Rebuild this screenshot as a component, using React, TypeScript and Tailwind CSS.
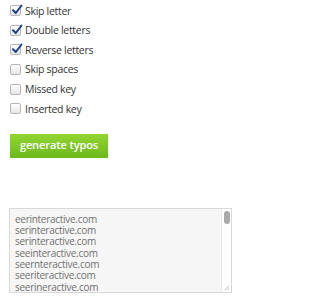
import React from "react";

const options = [
  { label: "Skip letter", checked: true },
  { label: "Double letters", checked: true },
  { label: "Reverse letters", checked: true },
  { label: "Skip spaces", checked: false },
  { label: "Missed key", checked: false },
  { label: "Inserted key", checked: false },
];

const lines = [
  "eerinteractive.com",
  "serinteractive.com",
  "serinteractive.com",
  "seeinteractive.com",
  "seernteractive.com",
  "seeriteractive.com",
  "seerineractive.com",
];

function Box({ checked }: { checked: boolean }) {
  return (
    <span className="relative w-[11px] h-[11px] rounded-[2px] border border-[#b5b5b5] bg-gradient-to-b from-[#ffffff] to-[#e6e6e6] shrink-0">
      {checked && (
        <svg
          viewBox="0 0 12 12"
          className="absolute left-[0px] top-[-2px] w-[12px] h-[12px]"
        >
          <path
            d="M2 6.2 L4.8 9 L10.5 1.5"
            fill="none"
            stroke="#1c3f8f"
            strokeWidth="2"
            strokeLinecap="round"
            strokeLinejoin="round"
          />
        </svg>
      )}
    </span>
  );
}

export default function App() {
  return (
    <div className="w-[246px] h-[300px] bg-white overflow-hidden font-['Open_Sans',sans-serif]">
      <div className="pl-[10px] pt-[1px] flex flex-col">
        {options.map((o) => (
          <div key={o.label} className="h-[19.6px] flex items-center gap-[4px]">
            <Box checked={o.checked} />
            <span className="text-[10.5px] tracking-[-0.3px] text-[#333] leading-none">{o.label}</span>
          </div>
        ))}
      </div>
      <div className="pl-[10px] mt-[15px]">
        <div className="w-[98px] h-[24px] flex items-center justify-center bg-gradient-to-b from-[#92d531] to-[#6cb91c] text-white font-semibold text-[11px] tracking-[-0.1px]">
          generate typos
        </div>
      </div>
      <div className="pl-[9px] mt-[50px]">
        <div className="relative w-[223px] h-[85px] border border-[#d8d8d8] bg-[#f6f6f6] flex">
          <div className="flex-1 pl-[5px] pt-[5px] overflow-hidden">
            {lines.map((l, i) => (
              <div key={i} className="text-[10px] leading-[11.35px] tracking-[-0.28px] text-[#707070] whitespace-nowrap">
                {l}
              </div>
            ))}
          </div>
          <div className="w-[10px] border-l border-[#e8e8e8] bg-white flex flex-col items-center pt-[2px]">
            <div className="w-[6px] h-[13px] rounded-full bg-[#a9a9a9]" />
          </div>
          <svg viewBox="0 0 8 8" className="absolute right-[1px] bottom-[1px] w-[7px] h-[7px]">
            <path d="M7 2 L2 7 M7 5 L5 7" stroke="#999" strokeWidth="0.8" />
          </svg>
        </div>
      </div>
    </div>
  );
}
